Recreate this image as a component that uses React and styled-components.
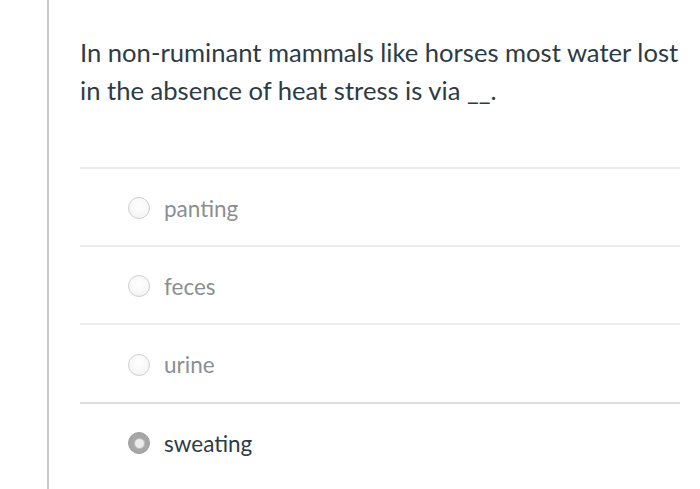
import React from "react";
import styled, { createGlobalStyle } from "styled-components";

const Global = createGlobalStyle`
  html, body { margin: 0; padding: 0; background: #fff; }
  body { font-family: Lato, "Noto Sans", sans-serif; }
`;

const Page = styled.div`
  height: 489px;
  overflow: hidden;
  padding-left: 47px;
  box-sizing: border-box;
`;

const Panel = styled.div`
  height: 100%;
  border-left: 2px solid #c8c8c8;
  padding: 33px 0 0 31px;
  box-sizing: border-box;
`;

const Question = styled.div`
  width: 612px;
  font-size: 25.6px;
  line-height: 38px;
  color: #2d3b45;
  margin-bottom: 58px;
`;

const Answers = styled.div`
  width: 600px;
`;

const Row = styled.div`
  display: flex;
  align-items: center;
  gap: 14px;
  height: ${(p) => (p.$tall ? 79 : 78)}px;
  padding: 2px 0 0 48px;
  box-sizing: border-box;
  border-top: 2px solid ${(p) => (p.$last ? "#dedede" : "#ececec")};
`;

const Radio = styled.span`
  width: 22px;
  height: 22px;
  border-radius: 50%;
  box-sizing: border-box;
  flex: none;
  position: relative;
  background: ${(p) =>
    p.$checked
      ? "#a6a6a6"
      : "radial-gradient(circle at 50% 40%, #ffffff 0%, #f7f7f7 60%, #efefef 100%)"};
  border: 1px solid ${(p) => (p.$checked ? "#a0a0a0" : "#cfcfcf")};
  &::after {
    content: "";
    display: ${(p) => (p.$checked ? "block" : "none")};
    position: absolute;
    left: 50%;
    top: 50%;
    width: 9px;
    height: 9px;
    margin: -4.5px 0 0 -4.5px;
    border-radius: 50%;
    background: #ececec;
    box-shadow: 0 0 0 1px #bdbdbd;
  }
`;

const Label = styled.span`
  font-size: 22.5px;
  color: ${(p) => (p.$checked ? "#2d3b45" : "#8a8f93")};
`;

const options = [
  { text: "panting" },
  { text: "feces" },
  { text: "urine", tall: true },
  { text: "sweating", checked: true },
];

export default function App() {
  return (
    <>
      <Global />
      <Page>
        <Panel>
          <Question>
            In non-ruminant mammals like horses most water lost in the absence
            of heat stress is via __.
          </Question>
          <Answers>
            {options.map((o, i) => (
              <Row key={o.text} $tall={o.tall} $last={i === options.length - 1}>
                <Radio $checked={o.checked} />
                <Label $checked={o.checked}>{o.text}</Label>
              </Row>
            ))}
          </Answers>
        </Panel>
      </Page>
    </>
  );
}
